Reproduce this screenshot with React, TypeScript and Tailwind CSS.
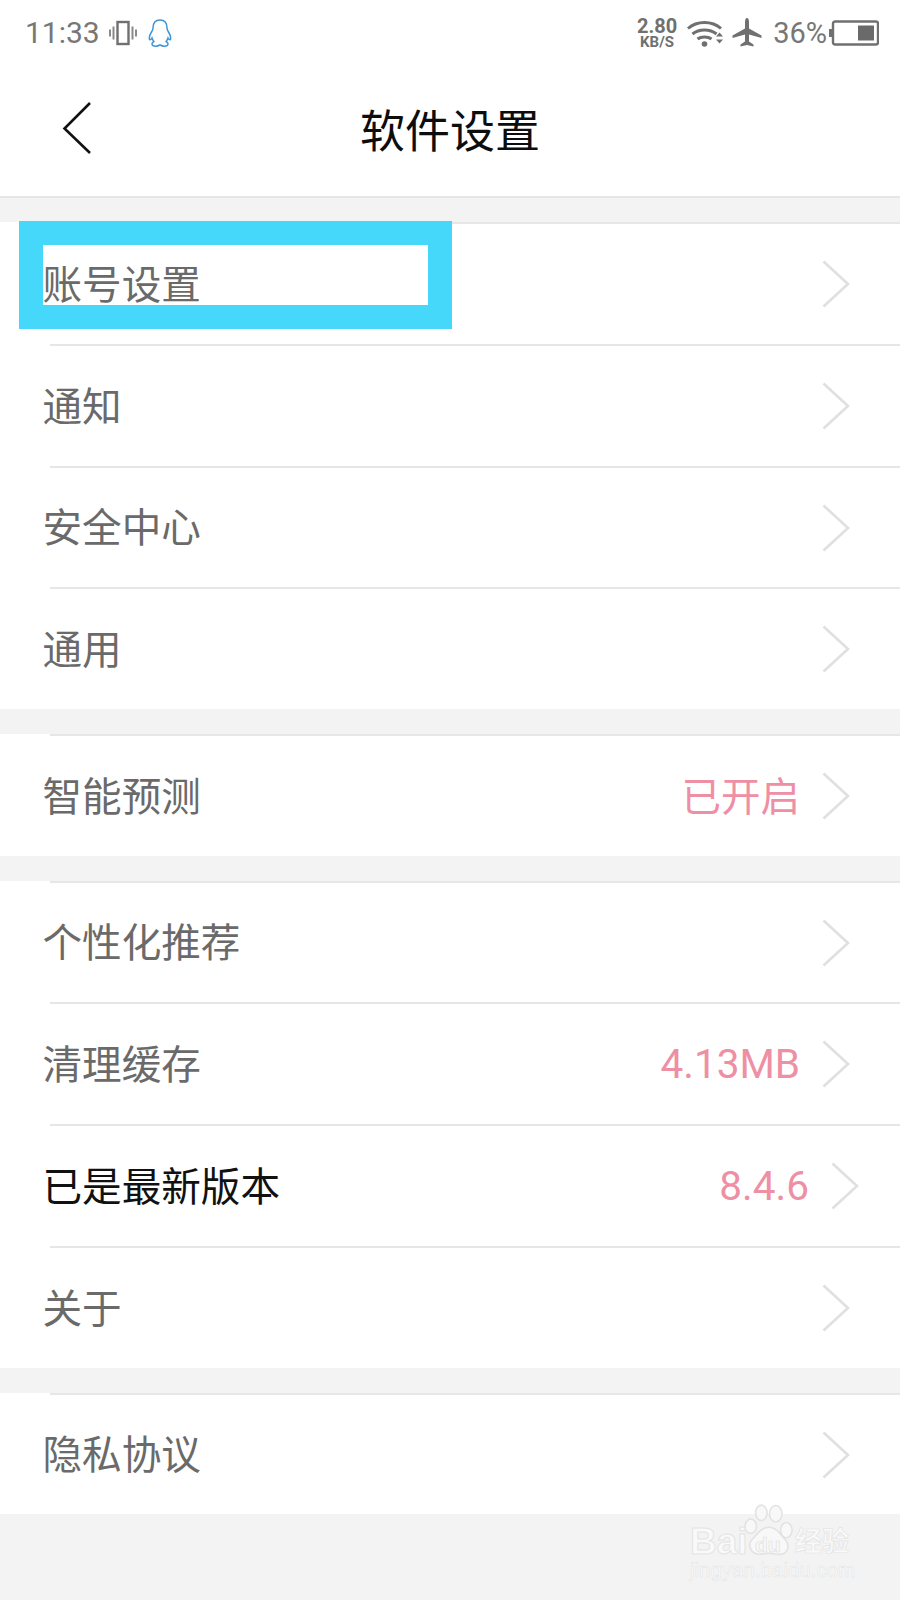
import React from "react";

const CJK = "font-['Noto_Sans_CJK_SC','Noto_Sans',sans-serif]";

function Chevron() {
  return (
    <svg width="28" height="48" viewBox="0 0 28 48" className="shrink-0" fill="none">
      <path d="M1.5 1.5 L26 24 L1.5 46.5" stroke="#e0e0e0" strokeWidth="2.6" />
    </svg>
  );
}

type RowProps = {
  label: string;
  value?: string;
  dark?: boolean;
  shift?: boolean;
  h: string;
  latin?: boolean;
};

function Row({ label, value, dark, shift, h, latin }: RowProps) {
  return (
    <div className={`relative flex items-center ${h} ${shift ? "pr-[41px]" : "pr-[50px]"}`}>
      <span className={`pl-[42.500px] pb-[5px] text-[39.600px] leading-none ${dark ? "text-[#111]" : "text-[#6a6a6a]"} ${CJK}`}>{label}</span>
      <span className="flex-1" />
      {value && (
        <span
          className={`mr-[22px] leading-none text-[#ee8fa4] ${latin ? "text-[40.500px] font-['Roboto',sans-serif]" : `text-[39.500px] pb-[4px] ${CJK}`}`}
        >
          {value}
        </span>
      )}
      <Chevron />
    </div>
  );
}

function Divider() {
  return <div className="ml-[50px] h-[2px] bg-[#e6e6e6]" />;
}

function Gap() {
  return <div className="h-[25px] bg-[#f3f3f3]" />;
}

function Vibrate() {
  return (
    <svg width="28" height="26" viewBox="0 0 28 26" fill="none" className="ml-[9px]">
      <rect x="8.5" y="2" width="11" height="22" stroke="#707070" strokeWidth="2.4" />
      <path d="M4.5 6.5V19.5M1 9.5V16.5M23.5 6.5V19.5M27 9.5V16.5" stroke="#8a8a8a" strokeWidth="2" />
    </svg>
  );
}

function Penguin() {
  return (
    <svg width="26" height="29" viewBox="0 0 26 29" fill="none" className="ml-[10px]">
      <path
        d="M13 1C8 1 6 4.800 6 9C6 10.500 5.500 11.500 4.500 13C3 15.500 2 18.500 2.500 20.500C3.500 21 4.500 20 5 19C5.500 20.500 6 21.500 6.800 22.500C5.500 23.200 4.800 24.300 5 25.500C5.500 27.500 9.500 27.800 13 26C16.500 27.800 20.500 27.500 21 25.500C21.200 24.300 20.500 23.200 19.200 22.500C20 21.500 20.500 20.500 21 19C21.500 20 22.500 21 23.500 20.500C24 18.500 23 15.500 21.500 13C20.500 11.500 20 10.500 20 9C20 4.800 18 1 13 1Z"
        stroke="#3e95d6"
        strokeWidth="1.5"
      />
    </svg>
  );
}

function Wifi() {
  return (
    <svg width="36" height="28" viewBox="0 0 36 28" fill="none" className="ml-[10px]">
      <path d="M1 9.500C10 1.500 25 1.500 34 9.500" stroke="#707070" strokeWidth="3" />
      <path d="M5.500 15C12 9.500 23 9.500 29.500 15" stroke="#707070" strokeWidth="3" />
      <path d="M10.500 20C14 17.200 21 17.200 24.500 20" stroke="#707070" strokeWidth="3" />
      <circle cx="17.500" cy="25" r="2.800" fill="#707070" />
      <path d="M29 17.500L32.500 13.500L36 17.500ZM29 20.500L32.500 24.500L36 20.500Z" fill="#707070" />
    </svg>
  );
}

function Plane() {
  return (
    <svg width="30" height="30" viewBox="0 0 30 30" className="ml-[9px]">
      <path
        fill="#707070"
        d="M15 0C13.600 0 13 2 13 4V10.500L0.500 17.500V20L13 16.500V23.500L8.500 26.500V28.500L15 27L21.500 28.500V26.500L17 23.500V16.500L29.500 20V17.500L17 10.500V4C17 2 16.400 0 15 0Z"
      />
    </svg>
  );
}

function Battery() {
  return (
    <svg width="50" height="26" viewBox="0 0 50 26" fill="none" className="ml-[2px]">
      <rect x="0" y="9" width="3" height="8" fill="#707070" />
      <rect x="4" y="1.500" width="45" height="23" rx="2" stroke="#707070" strokeWidth="2.400" />
      <rect x="29" y="5.500" width="16" height="15" fill="#6a6a6a" />
    </svg>
  );
}

function Paw() {
  return (
    <svg
      width="50"
      height="60"
      viewBox="0 0 52 62"
      fill="#f8f8f8"
      stroke="#e2e2e2"
      strokeWidth="1.600"
      className="absolute left-[54px] top-[-1px]"
    >
      <ellipse cx="18" cy="10" rx="6" ry="8" />
      <ellipse cx="33" cy="11" rx="6.500" ry="8.500" />
      <ellipse cx="7" cy="24" rx="6" ry="7.500" />
      <ellipse cx="44" cy="28" rx="6" ry="8" />
      <path d="M26 25C18 25 13 33 8 38C4 43 6 52 15 53C20 53.500 22 52 26 52C30 52 34 54 39 53C47 51 47 43 43 38C38 33 34 25 26 25Z" />
    </svg>
  );
}

function Watermark() {
  const base = "text-[#f9f9f9] whitespace-nowrap leading-none";
  return (
    <div className="relative w-[170px] h-[90px] select-none">
      <Paw />
      <span className={`absolute left-0 top-[19px] text-[37px] font-bold font-['Liberation_Sans',sans-serif] [-webkit-text-stroke:1px_#e4e4e4] ${base}`}>Bai</span>
      <span className={`absolute left-[65px] top-[30px] text-[21px] font-bold font-['Liberation_Sans',sans-serif] [-webkit-text-stroke:0.700px_#e0e0e0] ${base}`}>du</span>
      <span className={`absolute left-[105px] top-[22px] text-[27px] font-bold font-['Noto_Sans_CJK_SC',sans-serif] [-webkit-text-stroke:0.700px_#e4e4e4] ${base}`}>经验</span>
      <span className={`absolute left-0 top-[56px] text-[20.500px] font-['Liberation_Sans',sans-serif] [-webkit-text-stroke:0.500px_#e4e4e4] ${base}`}>jingyan.baidu.com</span>
    </div>
  );
}

export default function App() {
  return (
    <div className="relative w-[900px] h-[1600px] overflow-hidden bg-[#f3f3f3]">
      <div className="bg-white h-[196px] flex flex-col">
        <div className="flex items-center h-[66px] pl-[25px] pr-[21px] text-[#777] font-['Roboto',sans-serif]">
          <span className="text-[30px] leading-none">11:33</span>
          <Vibrate />
          <Penguin />
          <span className="flex-1" />
          <div className="flex flex-col items-center leading-none font-bold text-[#707070] font-['Roboto',sans-serif]">
            <span className="text-[20px] leading-[18px]">2.80</span>
            <span className="text-[15px] leading-[14px]">KB/S</span>
          </div>
          <Wifi />
          <Plane />
          <span className="ml-[11px] text-[29px] leading-none">36%</span>
          <Battery />
        </div>
        <div className="relative flex-1 flex items-center justify-center">
          <svg width="30" height="54" viewBox="0 0 30 54" fill="none" className="absolute left-[62px] top-[35px]">
            <path d="M28 2L2.500 27.500L28 52" stroke="#111" strokeWidth="2.600" />
          </svg>
          <span className={`text-[45px] pb-[5px] leading-none text-[#0d0d0d] ${CJK}`}>软件设置</span>
        </div>
      </div>
      <div className="h-[2px] bg-[#e6e6e6]" />
      <div className="h-[24px]" />

      <div className="bg-white">
        <Divider />
        <Row label="账号设置" h="h-[120px]" />
        <Divider />
        <Row label="通知" h="h-[120px]" />
        <Divider />
        <Row label="安全中心" h="h-[119px]" />
        <Divider />
        <Row label="通用" h="h-[120px]" />
      </div>
      <Gap />
      <div className="bg-white">
        <Divider />
        <Row label="智能预测" value="已开启" h="h-[120px]" />
      </div>
      <Gap />
      <div className="bg-white">
        <Divider />
        <Row label="个性化推荐" h="h-[119px]" />
        <Divider />
        <Row label="清理缓存" value="4.13MB" latin h="h-[120px]" />
        <Divider />
        <Row label="已是最新版本" value="8.4.6" latin dark shift h="h-[120px]" />
        <Divider />
        <Row label="关于" h="h-[120px]" />
      </div>
      <Gap />
      <div className="bg-white">
        <Divider />
        <Row label="隐私协议" h="h-[119px]" />
      </div>

      <div className="absolute left-[19px] top-[221px] w-[433px] h-[108px] border-[24px] border-[#46d8fb]" />
      <div className="absolute left-[690px] top-[1504px]">
        <Watermark />
      </div>
    </div>
  );
}
